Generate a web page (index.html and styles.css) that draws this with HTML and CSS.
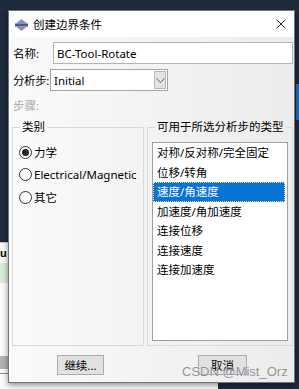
FILE: index.html
```html
<!DOCTYPE html>
<html lang="zh-CN">

<head>
    <meta charset="UTF-8">
    <title>创建边界条件</title>
    <link rel="stylesheet" href="styles.css">
</head>

<body>
    <div class="desk">
        <!-- main window behind the dialog -->
        <div class="app">
            <div class="app-text">u</div>
            <div class="app-green"></div>
            <div class="app-grey"></div>
            <div class="app-line"></div>
        </div>
        <div class="edge-blue"></div>

        <div class="dialog">
            <div class="titlebar">
                <svg class="logo" width="13" height="12" viewBox="0 0 13 12">
                    <polygon points="6.5,0 12,4.5 1,4.5" fill="#8a8ec4" />
                    <rect x="0" y="4.5" width="13" height="3" fill="#4d5788" />
                    <polygon points="1,7.5 12,7.5 6.5,12" fill="#8a8ec4" />
                </svg>
                <span class="title">创建边界条件</span>
                <svg class="close" width="10" height="10" viewBox="0 0 10 10">
                    <path d="M0.5 0.5 L9.5 9.5 M9.5 0.5 L0.5 9.5" stroke="#222" stroke-width="1" />
                </svg>
            </div>

            <div class="content">
                <div class="row">
                    <span class="lbl name-lbl">名称:</span>
                    <div class="field name-field">BC-Tool-Rotate</div>
                </div>
                <div class="row step-row">
                    <span class="lbl step-lbl">分析步:</span>
                    <div class="field combo">
                        <span class="combo-text">Initial</span>
                        <span class="drop">
                            <svg width="9" height="5" viewBox="0 0 9 5">
                                <path d="M0.5 0.5 L4.5 4.5 L8.5 0.5" fill="none" stroke="#606060" stroke-width="1" />
                            </svg>
                        </span>
                    </div>
                </div>
                <div class="row muted">步骤:</div>

                <div class="groups">
                    <fieldset class="group cat">
                        <legend>类别</legend>
                        <div class="radios">
                            <div class="radio-row"><span class="radio on"></span>力学</div>
                            <div class="radio-row"><span class="radio"></span>Electrical/Magnetic</div>
                            <div class="radio-row"><span class="radio"></span>其它</div>
                        </div>
                    </fieldset>
                    <fieldset class="group types">
                        <legend>可用于所选分析步的类型</legend>
                        <ul class="list">
                            <li>对称/反对称/完全固定</li>
                            <li>位移/转角</li>
                            <li class="selected">速度/角速度</li>
                            <li>加速度/角加速度</li>
                            <li>连接位移</li>
                            <li>连接速度</li>
                            <li>连接加速度</li>
                        </ul>
                    </fieldset>
                </div>

                <div class="buttons">
                    <button class="btn go">继续...</button>
                    <button class="btn cancel">取消</button>
                </div>
            </div>
        </div>

        <div class="watermark">CSDN @Mist_Orz</div>
    </div>
</body>

</html>
```

FILE: styles.css
```css
* {
    box-sizing: border-box;
}

body {
    margin: 0;
    font-family: "Noto Sans", "Noto Sans CJK SC", sans-serif;
    font-size: 11.5px;
    color: #000;
}

.desk {
    position: relative;
    width: 299px;
    height: 389px;
    overflow: hidden;
    background: #1f2a3d;
}

/* window behind */
.app {
    position: absolute;
    left: 0;
    top: 242px;
    width: 218px;
    height: 147px;
    background: #fbfbfb;
    border-top: 1px solid #c9c9c9;
}

.app-text {
    margin: 3px 0 0 0;
    font-family: "Liberation Sans", sans-serif;
    font-weight: bold;
    font-size: 11px;
    line-height: 14px;
}

.app-green {
    margin-top: 3px;
    height: 20px;
    background: #d8ecd6;
}

.app-grey {
    margin-top: 73px;
    height: 13px;
    background: #b3b3b3;
}

.app-line {
    margin-top: 4px;
    height: 1px;
    background: #8a8a8a;
}

.edge-blue {
    position: absolute;
    right: 0;
    top: 84px;
    width: 3px;
    height: 36px;
    background: #1f6fc0;
}

/* dialog */
.dialog {
    position: absolute;
    left: 8px;
    top: 10px;
    width: 287px;
    height: 373px;
    border: 1px solid #6f7783;
    background: linear-gradient(to right, #fafafa, #ececec);
    box-shadow: 0 2px 6px rgba(0, 0, 0, 0.45);
}

.titlebar {
    height: 26px;
    background: #fff;
    display: flex;
    align-items: center;
    padding-left: 6px;
}

.logo {
    margin-top: 1px;
}

.title {
    margin-left: 5px;
    font-size: 11.5px;
}

.close {
    margin-left: auto;
    margin-right: 8px;
}

.content {
    padding: 5px 0 0 4px;
}

.row {
    display: flex;
    align-items: center;
    height: 22px;
    white-space: nowrap;
}

.lbl {
    flex: none;
}

.name-lbl {
    width: 40px;
}

.step-row {
    margin-top: 5px;
}

.step-lbl {
    width: 37px;
    letter-spacing: -0.4px;
}

.field {
    height: 22px;
    background: #fff;
    border: 1px solid #b4b4b4;
    display: flex;
    align-items: center;
    padding-left: 3px;
}

.name-field {
    width: 240px;
}

.combo {
    width: 118px;
    border-color: #a6a6a6;
    padding-right: 1px;
}

.combo-text {
    flex: 1;
}

.drop {
    width: 12px;
    height: 18px;
    background: #e3e3e3;
    border: 1px solid #b8b8b8;
    display: flex;
    align-items: center;
    justify-content: center;
}

.muted {
    margin-top: 6px;
    height: 16px;
    color: #a8a8a8;
}

/* group boxes */
.groups {
    display: flex;
    gap: 3px;
    margin: 7px 0 0 -1px;
    height: 226px;
}

.group {
    margin: 0;
    padding: 0;
    border: 1px solid #d9d9d9;
    min-width: 0;
}

.group legend {
    margin-left: 7px;
    padding: 0 2px;
    line-height: 14px;
}

.cat {
    width: 132px;
}

.types {
    width: 146px;
}

.radios {
    padding: 7px 0 0 6px;
}

.radio-row {
    height: 22.5px;
    display: flex;
    align-items: center;
    white-space: nowrap;
}

.radio {
    width: 13px;
    height: 13px;
    border: 1px solid #333;
    border-radius: 50%;
    background: #fff;
    margin-right: 2px;
    display: flex;
    align-items: center;
    justify-content: center;
}

.radio.on::after {
    content: "";
    width: 7px;
    height: 7px;
    border-radius: 50%;
    background: #222;
}

.list {
    list-style: none;
    margin: 8px 0 0 4px;
    padding: 0 2px 0 0;
    width: 136px;
    height: 199px;
    background: #fff;
    border: 1px solid #a0a0a0;
}

.list li {
    height: 19.5px;
    line-height: 19.5px;
    padding-left: 4px;
    white-space: nowrap;
}

.list li.selected {
    background: #0a74d4;
    color: #fff;
    outline: 1px dotted #f3d9a0;
    outline-offset: -1px;
}

.buttons {
    display: flex;
    margin-top: 9px;
}

.btn {
    height: 20px;
    padding: 0;
    font-family: inherit;
    font-size: 11.5px;
    background: #e1e1e1;
    border: 1px solid #adadad;
    color: #000;
}

.go {
    width: 47px;
    margin-left: 44px;
}

.cancel {
    width: 49px;
    margin-left: 94px;
}

.watermark {
    position: absolute;
    left: 182px;
    top: 364px;
    font-family: "Liberation Sans", sans-serif;
    font-size: 13px;
    line-height: 16px;
    color: rgba(110, 110, 110, 0.75);
    text-shadow: 0 0 1px rgba(255, 255, 255, 0.8);
}
```
